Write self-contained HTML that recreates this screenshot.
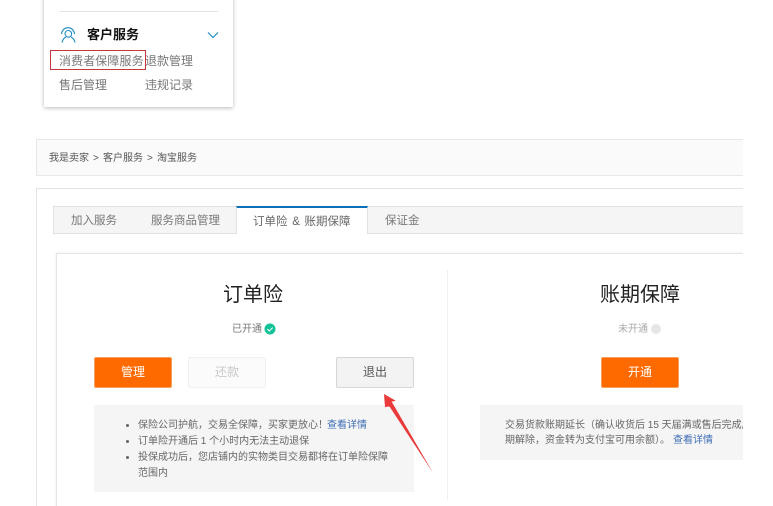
<!DOCTYPE html>
<html lang="zh">
<head>
<meta charset="utf-8">
<style>
html,body{margin:0;padding:0;background:#fff;width:773px;height:506px;overflow:hidden;}
body{position:relative;font-family:"Liberation Sans","Noto Sans CJK SC",sans-serif;color:#666;}
#wrap{position:absolute;left:0;top:0;width:743px;height:506px;overflow:hidden;}
.a{position:absolute;box-sizing:border-box;}
.t{position:absolute;white-space:nowrap;line-height:16px;}
.btn{position:absolute;box-sizing:border-box;width:78px;height:31px;top:357px;border-radius:2px;text-align:center;line-height:29px;font-size:12px;}
.o{background:#ff6a00;color:#fff;border:1px solid #f5a05a;}
a{color:#3d6db5;text-decoration:none;}
</style>
</head>
<body>
<div id="wrap">
<!-- top card -->
<div class="a" style="left:44px;top:-5px;width:189px;height:112px;background:#fff;box-shadow:0 1px 4px rgba(0,0,0,.28);"></div>
<div class="a" style="left:60px;top:11px;width:158px;height:1px;background:#e2e4e8;"></div>
<svg class="a" style="left:59px;top:26px;" width="18" height="18" viewBox="0 0 18 18" fill="none" stroke="#1c8fc4" stroke-width="1.1">
<path d="M2.5 8C3 3.5 6 1.7 9 1.7s6 1.8 6.5 6.3"/>
<path d="M6 8C6 5.7 7.6 4.5 9.4 4.5s3.2 1.5 3.2 3.5-1.5 3.2-3.2 3.2S6.6 10 6 8"/>
<path d="M3 16.5C3.5 14 5 12 7 11M16 16.5C15.5 14 14 12 12 11"/>
</svg>
<div class="t" style="left:87px;top:27px;font-size:13px;font-weight:bold;color:#111;">客户服务</div>
<svg class="a" style="left:207px;top:31px;" width="12" height="8" viewBox="0 0 12 8" fill="none" stroke="#1c8fc4" stroke-width="1.2"><path d="M1 1.5l5 5 5-5"/></svg>
<div class="t" style="left:59px;top:53px;font-size:12px;letter-spacing:.1px;color:#777;">消费者保障服务</div>
<div class="t" style="left:145px;top:53px;font-size:12px;color:#777;">退款管理</div>
<div class="t" style="left:59px;top:77px;font-size:12px;color:#777;">售后管理</div>
<div class="t" style="left:145px;top:77px;font-size:12px;color:#777;">违规记录</div>
<div class="a" style="left:50px;top:50px;width:96px;height:20px;border:1px solid #c9353b;"></div>

<!-- breadcrumb -->
<div class="a" style="left:36px;top:139px;width:720px;height:37px;background:#fafafa;border:1px solid #e8e8e8;"></div>
<div class="t" style="left:49px;top:151px;font-size:10px;color:#555;">我是卖家</div>
<div class="t" style="left:93px;top:151px;font-size:10px;color:#555;">&gt;</div>
<div class="t" style="left:103px;top:151px;font-size:10px;color:#555;">客户服务</div>
<div class="t" style="left:147px;top:151px;font-size:10px;color:#555;">&gt;</div>
<div class="t" style="left:157px;top:151px;font-size:10px;color:#555;">淘宝服务</div>

<!-- main panel -->
<div class="a" style="left:36px;top:188px;width:720px;height:330px;border:1px solid #e1e4ea;background:#fff;"></div>

<!-- tabs -->
<div class="a" style="left:53px;top:206px;width:700px;height:28px;background:#f5f5f5;border:1px solid #e2e2e2;"></div>
<div class="a" style="left:236px;top:206px;width:132px;height:28px;background:#fff;border-top:2px solid #0b6fb8;border-left:1px solid #e2e2e2;border-right:1px solid #e2e2e2;"></div>
<div class="t" style="left:71px;top:213px;font-size:11.5px;color:#777;">加入服务</div>
<div class="t" style="left:151px;top:213px;font-size:11.5px;color:#777;">服务商品管理</div>
<div class="t" style="left:253px;top:214px;font-size:11.5px;word-spacing:1.5px;color:#666;">订单险 &amp; 账期保障</div>
<div class="t" style="left:385px;top:213px;font-size:11.5px;color:#777;">保证金</div>

<!-- inner card -->
<div class="a" style="left:56px;top:253px;width:700px;height:270px;background:#fff;border:1px solid #e6e6e6;box-shadow:0 0 3px rgba(0,0,0,.08);"></div>
<div class="a" style="left:447px;top:270px;width:1px;height:230px;background:#f0f0f0;"></div>

<!-- left column -->
<div class="t" style="left:223px;top:283px;font-size:20px;line-height:24px;color:#222;">订单险</div>
<div class="t" style="left:232px;top:321px;font-size:10px;line-height:17px;color:#777;">已开通</div>
<svg class="a" style="left:264px;top:323px;" width="12" height="12" viewBox="0 0 12 12"><circle cx="6" cy="6" r="5.5" fill="#12c39a"/><path d="M3.3 6l2 2 3.3-3.4" fill="none" stroke="#fff" stroke-width="1"/></svg>
<div class="btn o" style="left:94px;">管理</div>
<div class="btn" style="left:188px;background:#fbfbfb;border:1px solid #f1f1f1;color:#c8c8c8;">还款</div>
<div class="btn" style="left:336px;background:#f3f3f3;border:1px solid #d6d6d6;color:#555;">退出</div>
<div class="a" style="left:94px;top:405px;width:320px;height:87px;background:#f5f5f5;"></div>
<div class="a" style="left:126px;top:424px;width:3px;height:3px;border-radius:50%;background:#666;"></div>
<div class="a" style="left:126px;top:440px;width:3px;height:3px;border-radius:50%;background:#666;"></div>
<div class="a" style="left:126px;top:456px;width:3px;height:3px;border-radius:50%;background:#666;"></div>
<div class="t" style="left:138px;top:418px;font-size:10px;">保险公司护航，交易全保障，买家更放心！<a style="margin-left:-1px;">查看详情</a></div>
<div class="t" style="left:138px;top:434px;font-size:10px;">订单险开通后 1 个小时内无法主动退保</div>
<div class="t" style="left:138px;top:449px;font-size:10px;line-height:17px;">投保成功后，您店铺内的实物类目交易都将在订单险保障</div>
<div class="t" style="left:138px;top:465px;font-size:10px;line-height:17px;">范围内</div>

<!-- right column -->
<div class="t" style="left:600px;top:283px;font-size:20px;line-height:24px;color:#222;">账期保障</div>
<div class="t" style="left:618px;top:321px;font-size:10px;line-height:17px;color:#aaa;">未开通</div>
<div class="a" style="left:651px;top:324px;width:10px;height:10px;border-radius:50%;background:#e6e6e6;"></div>
<div class="btn o" style="left:601px;">开通</div>
<div class="a" style="left:480px;top:405px;width:263px;height:55px;background:#f5f5f5;"></div>
<div class="a" style="left:505px;top:417px;width:238px;height:34px;overflow:hidden;">
<div class="t" style="left:0;top:1px;font-size:10px;">交易货款账期延长（确认收货后 15 天届满或售后完成后，账</div>
<div class="t" style="left:0;top:16px;font-size:10px;">期解除，资金转为支付宝可用余额）。<a style="margin-left:3px;">查看详情</a></div>
</div>

<!-- arrow -->
<svg class="a" style="left:380px;top:388px;" width="60" height="90" viewBox="0 0 60 90"><polygon points="4,6 15.7,12.7 11.7,13.7 53.3,85.3 9.5,18.5 5,19" fill="#ea3a3a"/></svg>
</div>
</body>
</html>
